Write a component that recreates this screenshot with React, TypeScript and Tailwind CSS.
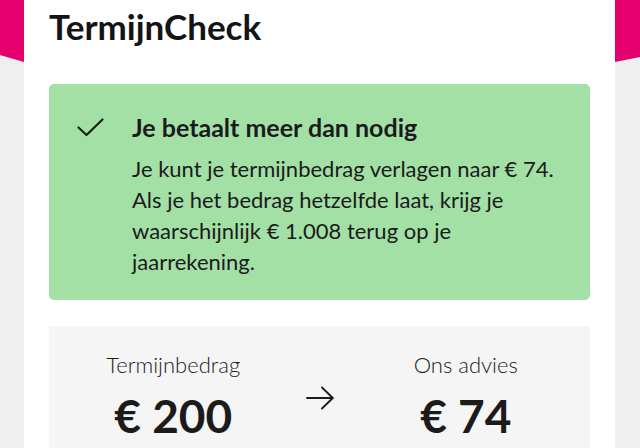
import React from "react";

export default function App() {
  return (
    <div className="relative w-[640px] h-[448px] overflow-hidden bg-[#efefef] text-[#1b1b1b]" style={{ fontFamily: "Lato, 'Noto Sans', sans-serif" }}>
      <div
        className="absolute left-0 top-0 w-[640px] h-[64px] bg-[#e5006d]"
        style={{ clipPath: "polygon(0 0, 640px 0, 640px 57px, 615px 62px, 24px 62px, 0 55px)" }}
      />
      <div className="relative ml-[24px] w-[591px] h-[448px] bg-white px-[25px] pt-[5px]">
        <h1 className="text-[35px] font-bold leading-[42px] text-[#141414]">TermijnCheck</h1>
        <div className="mt-[37px] rounded-[5px] bg-[#a3e0a6] pl-[28px] pr-[16px] pt-[28px] pb-[23px]">
          <div className="flex items-center gap-[28px] h-[30px]">
            <svg width="27" height="19" viewBox="0 0 27 19" fill="none" className="shrink-0">
              <path d="M1.5 9.5 L9.5 17 L25.5 1.5" stroke="#1b1b1b" strokeWidth="2.2" strokeLinecap="round" strokeLinejoin="round" />
            </svg>
            <div className="text-[25px] font-bold leading-[30px] whitespace-nowrap">Je betaalt meer dan nodig</div>
          </div>
          <p className="mt-[11px] ml-[55px] text-[22px] leading-[31px] whitespace-nowrap">
            Je kunt je termijnbedrag verlagen naar € 74.<br />
            Als je het bedrag hetzelfde laat, krijg je<br />
            waarschijnlijk € 1.008 terug op je<br />
            jaarrekening.
          </p>
        </div>
        <div className="mt-[26px] h-[200px] bg-[#f5f5f5] px-[24px] pt-[25px] grid grid-cols-[1fr_auto_1fr] gap-x-[32px]">
          <div className="flex flex-col items-center">
            <div className="text-[22px] font-light leading-[28px]">Termijnbedrag</div>
            <div className="mt-[9px] text-[46px] font-bold leading-[55px]">€ 200</div>
          </div>
          <div className="pt-[35px]">
            <svg width="28" height="24" viewBox="0 0 28 24" fill="none">
              <path d="M1 12 H27 M16 1.5 L26.8 12 L16 22.5" stroke="#1b1b1b" strokeWidth="1.8" strokeLinecap="round" strokeLinejoin="round" />
            </svg>
          </div>
          <div className="flex flex-col items-center">
            <div className="text-[22px] font-light leading-[28px]">Ons advies</div>
            <div className="mt-[9px] text-[46px] font-bold leading-[55px]">€ 74</div>
          </div>
        </div>
      </div>
    </div>
  );
}
